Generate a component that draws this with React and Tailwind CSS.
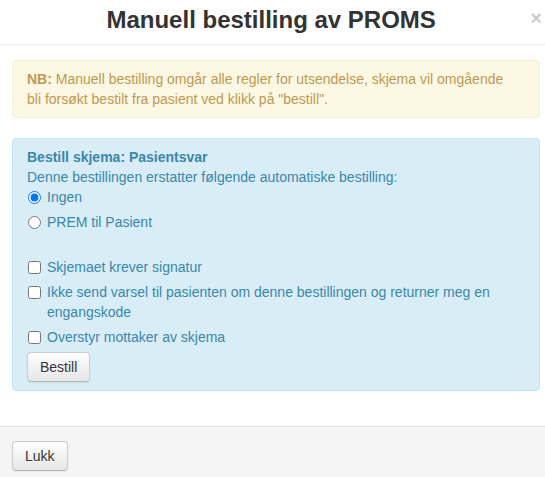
export default function App() {
  const btn =
    "px-[12px] py-[4px] text-[14px] leading-[20px] text-[#333] border border-[#ccc] border-b-[#b3b3b3] rounded-[4px] bg-linear-to-b from-white to-[#e6e6e6] shadow-[inset_0_1px_0_rgba(255,255,255,.2),0_1px_2px_rgba(0,0,0,.05)] [text-shadow:0_1px_1px_rgba(255,255,255,.75)]";

  return (
    <div className="w-[545px] h-[477px] overflow-hidden bg-white font-['Liberation_Sans',Arial,sans-serif] text-[14px] leading-[20px] text-[#333]">
      <div className="w-[552px]">
        <header className="flex items-start pl-[12px] pr-[10px] pt-[5px] pb-[9px] border-b border-[#eee]">
          <h3 className="flex-1 text-center text-[24px] leading-[30px] font-bold text-[#333]">
            Manuell bestilling av PROMS
          </h3>
          <button className="mt-[3px] text-[20px] leading-[20px] font-bold text-black opacity-20">
            ×
          </button>
        </header>

        <div className="px-[12px] pt-[15px] pb-[15px]">
          <div className="mb-[20px] pt-[8px] pb-[8px] pl-[14px] pr-[30px] border border-[#fbeed5] bg-[#fcf8e3] rounded-[4px] text-[#c09853]">
            <strong>NB:</strong> Manuell bestilling omgår alle regler for utsendelse, skjema vil omgående bli
            forsøkt bestilt fra pasient ved klikk på "bestill".
          </div>

          <div className="mb-[20px] pt-[8px] pb-[8px] pl-[14px] pr-[35px] border border-[#bce8f1] bg-[#d9edf7] rounded-[4px] text-[#3a87ad]">
            <div className="font-bold">Bestill skjema: Pasientsvar</div>
            <div>Denne bestillingen erstatter følgende automatiske bestilling:</div>

            <label className="flex items-start mb-[5px]">
              <input type="radio" name="auto" defaultChecked className="w-[13px] h-[13px] mt-[4px] ml-[1px] mr-[6px] shrink-0" />
              <span>Ingen</span>
            </label>
            <label className="flex items-start mb-[5px]">
              <input type="radio" name="auto" className="w-[13px] h-[13px] mt-[4px] ml-[1px] mr-[6px] shrink-0" />
              <span>PREM til Pasient</span>
            </label>

            <div className="h-[20px]" />

            <label className="flex items-start mb-[5px]">
              <input type="checkbox" className="w-[13px] h-[13px] mt-[4px] ml-[1px] mr-[6px] shrink-0" />
              <span>Skjemaet krever signatur</span>
            </label>
            <label className="flex items-start mb-[5px]">
              <input type="checkbox" className="w-[13px] h-[13px] mt-[4px] ml-[1px] mr-[6px] shrink-0" />
              <span>Ikke send varsel til pasienten om denne bestillingen og returner meg en engangskode</span>
            </label>
            <label className="flex items-start mb-[5px]">
              <input type="checkbox" className="w-[13px] h-[13px] mt-[4px] ml-[1px] mr-[6px] shrink-0" />
              <span>Overstyr mottaker av skjema</span>
            </label>

            <button className={btn}>Bestill</button>
          </div>
        </div>

        <footer className="pt-[14px] pb-[15px] px-[12px] bg-[#f5f5f5] border-t border-[#ddd] shadow-[inset_0_1px_0_#fff]">
          <button className={btn}>Lukk</button>
        </footer>
      </div>
    </div>
  );
}
